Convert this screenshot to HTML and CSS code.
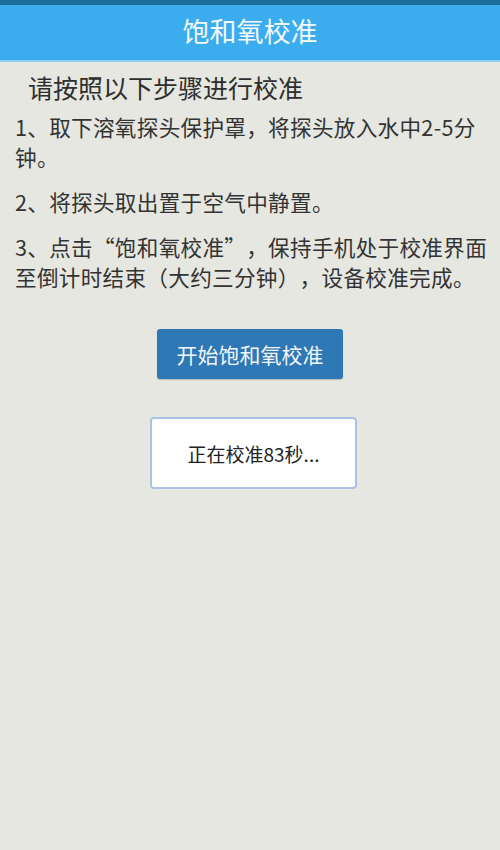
FILE: index.html
```html
<!DOCTYPE html>
<html lang="zh-CN">
<head>
  <meta charset="UTF-8">
  <meta name="viewport" content="width=device-width, initial-scale=1.0">
  <title>饱和氧校准</title>
  <link rel="stylesheet" href="styles.css">
</head>
<body>

  <div class="header">
    <h1>饱和氧校准</h1>
  </div>

  <div class="content">
    <h2>请按照以下步骤进行校准</h2>
    <p class="step">1、取下溶氧探头保护罩，将探头放入水中2-5分钟。</p>
    <p class="step">2、将探头取出置于空气中静置。</p>
    <p class="step">3、点击“饱和氧校准”，保持手机处于校准界面至倒计时结束（大约三分钟），设备校准完成。</p>

    <div class="actions">
      <button id="start">开始饱和氧校准</button>
      <div class="status">正在校准83秒...</div>
    </div>
  </div>

</body>
</html>
```

FILE: styles.css
```css
body {
  margin: 0;
  background-color: #e6e7e1;
  font-family: "Noto Sans CJK SC", "Noto Sans", sans-serif;
  color: #333333;
  min-height: 850px;
  text-spacing-trim: space-all;
}

.header {
  height: 55px;
  border-top: 5px solid #1e6c9c;
  border-bottom: 2px solid #8fd0f5;
  background-color: #3badee;
  display: flex;
  align-items: center;
  justify-content: center;
}

.header h1 {
  margin: 0 0 4px 0;
  font-size: 27px;
  font-weight: normal;
  color: #f4f9fc;
}

.content {
  padding: 8px 12px 0 15px;
}

.content h2 {
  margin: 0 0 8px 13px;
  font-size: 25px;
  font-weight: normal;
  line-height: 34px;
  color: #2e2e2e;
}

.step {
  margin: 0 0 15px 0;
  font-size: 21.6px;
  line-height: 30px;
  letter-spacing: 0.3px;
}

.actions {
  display: flex;
  flex-direction: column;
  align-items: center;
  padding-top: 22px;
  padding-right: 3px;
}

#start {
  width: 186px;
  height: 50px;
  border: none;
  border-radius: 3px;
  background-color: #2f78b6;
  color: #f2f6fa;
  font-family: inherit;
  font-size: 21px;
  box-shadow: 0 1px 1px rgba(0, 0, 0, 0.2);
}

.status {
  margin-top: 38px;
  margin-left: 7px;
  width: 203px;
  height: 68px;
  border: 2px solid #a9c3e3;
  border-radius: 4px;
  background-color: #ffffff;
  display: flex;
  align-items: center;
  justify-content: center;
  font-size: 19px;
  color: #222222;
}
```
